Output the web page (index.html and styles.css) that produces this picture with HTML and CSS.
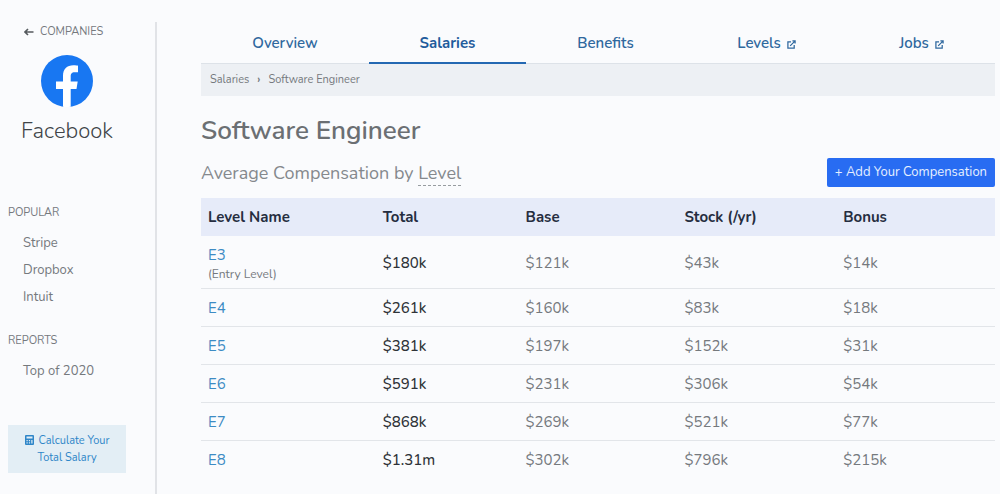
FILE: index.html
```html
<!DOCTYPE html>
<html lang="en">
<head>
<meta charset="utf-8">
<title>Facebook Software Engineer Salaries</title>
<link rel="stylesheet" href="styles.css">
</head>
<body>
<div class="layout">
  <aside class="sidebar">
    <a class="back" href="#">
      <svg class="back-icon" viewBox="0 0 10 8" aria-hidden="true"><path d="M4 1 1 4l3 3M1 4h8.500"/></svg>
      COMPANIES
    </a>
    <svg class="logo" viewBox="0 0 52 52" role="img" aria-label="Facebook logo">
      <circle cx="26" cy="26" r="26" fill="#1877f2"/>
      <path fill="#fff" d="M22 51.800V34h-7v-7.500h7V21c0-7 4-10.700 10.300-10.700 2.200 0 4.700.4 4.700.4v6.600h-3.300c-3.200 0-4 1.800-4 3.900v5.300h7L35.500 34h-5.800v17.800a26 26 0 0 1-7.700 0z"/>
    </svg>
    <h2 class="company">Facebook</h2>
    <nav class="group">
      <h3 class="group-title">POPULAR</h3>
      <ul class="links">
        <li><a href="#">Stripe</a></li>
        <li><a href="#">Dropbox</a></li>
        <li><a href="#">Intuit</a></li>
      </ul>
    </nav>
    <nav class="group">
      <h3 class="group-title">REPORTS</h3>
      <ul class="links">
        <li><a href="#">Top of 2020</a></li>
      </ul>
    </nav>
    <a class="calculate" href="#">
      <svg class="calc-icon" viewBox="0 0 9 10" aria-hidden="true"><rect width="9" height="10" rx="1" fill="#2f86c8"/><path d="M1.500 1.500h6v2h-6zM1.500 5h1.200v1.200H1.500zM3.900 5h1.200v1.200H3.900zM6.300 5h1.200v3.500H6.300zM1.500 7.300h1.200v1.200H1.500zM3.900 7.300h1.200v1.200H3.900z" fill="#e3eef5"/></svg>
      Calculate Your Total Salary
    </a>
  </aside>
  <main class="main">
    <nav class="tabs">
      <a class="tab" href="#">Overview</a>
      <a class="tab active" href="#" aria-current="page">Salaries</a>
      <a class="tab" href="#">Benefits</a>
      <a class="tab" href="#">Levels <svg class="external" viewBox="0 0 10 10" aria-hidden="true"><path d="M4.500 2H1v7h7V5.500M3.500 6.500 8.500 1.500M6 1h3v3"/></svg></a>
      <a class="tab" href="#">Jobs <svg class="external" viewBox="0 0 10 10" aria-hidden="true"><path d="M4.500 2H1v7h7V5.500M3.500 6.500 8.500 1.500M6 1h3v3"/></svg></a>
    </nav>
    <nav class="breadcrumb" aria-label="Breadcrumb">
      <a href="#">Salaries</a><span class="separator">›</span><a href="#">Software Engineer</a>
    </nav>
    <h1 class="title">Software Engineer</h1>
    <div class="subhead">
      <h2 class="subtitle">Average Compensation by <span class="term">Level</span></h2>
      <button class="add" type="button">+ Add Your Compensation</button>
    </div>
    <table class="salaries">
      <thead>
        <tr><th class="col-level">Level Name</th><th class="col-total">Total</th><th>Base</th><th>Stock (/yr)</th><th>Bonus</th></tr>
      </thead>
      <tbody>
        <tr><td><a href="#">E3</a><small class="note">(Entry Level)</small></td><td class="total">$180k</td><td>$121k</td><td>$43k</td><td>$14k</td></tr>
        <tr><td><a href="#">E4</a></td><td class="total">$261k</td><td>$160k</td><td>$83k</td><td>$18k</td></tr>
        <tr><td><a href="#">E5</a></td><td class="total">$381k</td><td>$197k</td><td>$152k</td><td>$31k</td></tr>
        <tr><td><a href="#">E6</a></td><td class="total">$591k</td><td>$231k</td><td>$306k</td><td>$54k</td></tr>
        <tr><td><a href="#">E7</a></td><td class="total">$868k</td><td>$269k</td><td>$521k</td><td>$77k</td></tr>
        <tr><td><a href="#">E8</a></td><td class="total">$1.31m</td><td>$302k</td><td>$796k</td><td>$215k</td></tr>
      </tbody>
    </table>
  </main>
</div>
</body>
</html>
```
FILE: styles.css
```css
* { box-sizing: border-box; }
body {
  margin: 0;
  background: #fafbfd;
  color: #75797d;
  font-family: Nunito, Lato, "Open Sans", sans-serif;
  font-size: 15px;
  line-height: 20px;
}
h1, h2, h3, ul { margin: 0; padding: 0; font-weight: 400; }
a { color: inherit; text-decoration: none; }

.layout {
  display: grid;
  grid-template-columns: 157px minmax(0, 1fr);
  min-height: 100vh;
  padding-top: 22px;
}
.sidebar {
  display: flex;
  flex-direction: column;
  border-right: 2px solid #e1e3e7;
  padding: 0 29px 20px 8px;
}
.back {
  display: flex;
  align-items: center;
  gap: 6px;
  margin-left: 16px;
  font-size: 11px;
  line-height: 20px;
}
.back-icon { width: 10px; height: 8px; fill: none; stroke: #555a5e; stroke-width: 1.6; }
.logo { width: 52px; height: 52px; margin-top: 13px; align-self: center; }
.company {
  align-self: center;
  margin-top: 8px;
  font-size: 22px;
  font-weight: 300;
  line-height: 32px;
  color: #404448;
}
.group { margin-top: 24px; }
.company + .group { margin-top: 56px; }
.group-title { font-size: 11px; line-height: 20px; }
.links {
  display: grid;
  gap: 7px;
  margin-top: 10px;
  padding-left: 15px;
  list-style: none;
  font-size: 13px;
}
.calculate {
  margin-top: 44px;
  padding: 7px 12px;
  background: #e3eef5;
  color: #2f86c8;
  font-size: 11px;
  line-height: 17px;
  text-align: center;
}
.calc-icon { width: 9px; height: 10px; margin-right: 2px; vertical-align: -1px; }

.main { padding: 0 5px 10px 44px; }
.tabs {
  display: grid;
  grid-template-columns: 168fr 157fr 159fr 163fr 147fr;
  border-bottom: 1px solid #dde2e8;
}
.tab {
  padding: 11px 0 9px;
  margin-bottom: -1px;
  border-bottom: 2px solid transparent;
  color: #2f689e;
  font-weight: 600;
  text-align: center;
}
.active { border-color: #2468b2; color: #1f5c9c; font-weight: 700; }
.external {
  width: 9px;
  height: 9px;
  margin-left: 2px;
  vertical-align: -1px;
  fill: none;
  stroke: currentColor;
  stroke-width: 1.4;
}
.breadcrumb {
  display: flex;
  gap: 8px;
  padding: 6px 9px;
  background: #edf0f4;
  font-size: 11px;
}
.separator { font-weight: 700; }
.title {
  margin-top: 17px;
  font-size: 26px;
  font-weight: 600;
  line-height: 36px;
  color: #6b6f73;
}
.subhead {
  display: flex;
  align-items: center;
  justify-content: space-between;
  margin: 9px 0 11px;
}
.subtitle { font-size: 18px; line-height: 26px; color: #85898d; }
.term { border-bottom: 1px dashed #979ca0; }
.add {
  padding: 4px 8px 5px;
  border: 0;
  border-radius: 2px;
  background: #286cf2;
  color: #e6f0ff;
  font: inherit;
  font-size: 13px;
  line-height: 20px;
}
.salaries { width: 100%; border-collapse: collapse; table-layout: fixed; }
.salaries th {
  padding: 9px 7px;
  background: #e6ebf9;
  color: #252d40;
  font-weight: 700;
  text-align: left;
}
.col-level { width: 22%; }
.col-total { width: 18%; }
.salaries td { padding: 9px 7px 8px; border-bottom: 1px solid #e2e5e9; }
.salaries tbody tr:last-child td { border-bottom: 0; }
.salaries td a { color: #3d8bc4; }
.salaries .total { color: #2f3338; font-weight: 500; }
.note { display: block; margin-bottom: -3px; font-size: 12px; line-height: 18px; }
```
